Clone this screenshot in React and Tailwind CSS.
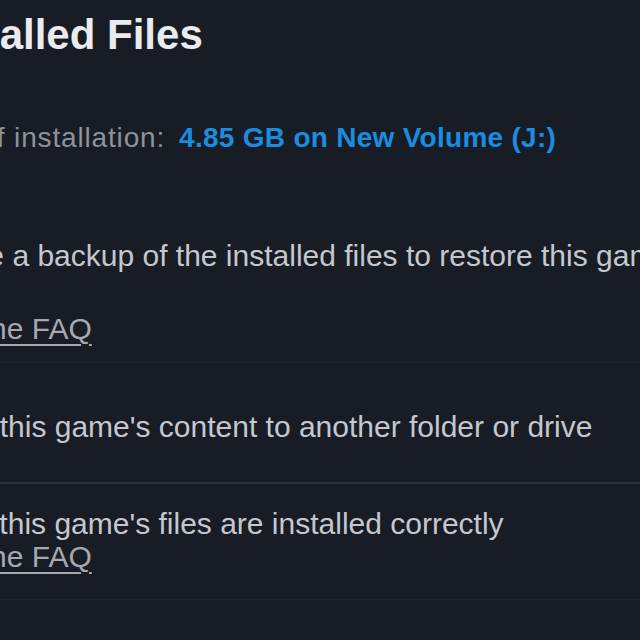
export default function App() {
  const font = { fontFamily: '"Liberation Sans", Arial, sans-serif' };
  return (
    <div
      className="w-[640px] h-[640px] overflow-hidden bg-[#171c25]"
      style={font}
    >
      <div className="ml-[-86px] w-[820px]">
        <h1 className="ml-[11px] pt-[14px] text-[42px] leading-none font-bold text-[#e9ebee] whitespace-nowrap">
          Installed Files
        </h1>

        <div className="mt-[68px] flex items-baseline gap-[14px] text-[28px] leading-none whitespace-nowrap">
          <span className="text-[#8c939b] tracking-[0.03em]">
            Size of installation:
          </span>
          <span className="font-bold text-[#1b8de0] tracking-[0.01em]">
            4.85 GB on New Volume (J:)
          </span>
        </div>

        <div className="mt-[89px] pb-[18px] border-b border-[#1f252f] text-[30px] leading-none whitespace-nowrap">
          <div className="text-[#c4c8ce]">
            Create a backup of the installed files to restore this game in the
            future
          </div>
          <div className="mt-[43px] ml-[6px]">
            <span className="text-[#a4a9b0] underline decoration-[2px] underline-offset-[5px]">
              See the FAQ
            </span>
          </div>
        </div>

        <div className="pt-[49px] pb-[40px] border-b-2 border-[#2a303b] text-[30px] leading-none whitespace-nowrap">
          <div className="ml-[4px] text-[#c4c8ce]">
            Move this game's content to another folder or drive
          </div>
        </div>

        <div className="pt-[25px] pb-[27px] border-b border-[#1f252f] text-[30px] leading-none whitespace-nowrap">
          <div className="ml-[2px] text-[#c4c8ce]">
            Verify this game's files are installed correctly
          </div>
          <div className="mt-[3px] ml-[6px]">
            <span className="text-[#a4a9b0] underline decoration-[2px] underline-offset-[5px]">
              See the FAQ
            </span>
          </div>
        </div>
      </div>
    </div>
  );
}
